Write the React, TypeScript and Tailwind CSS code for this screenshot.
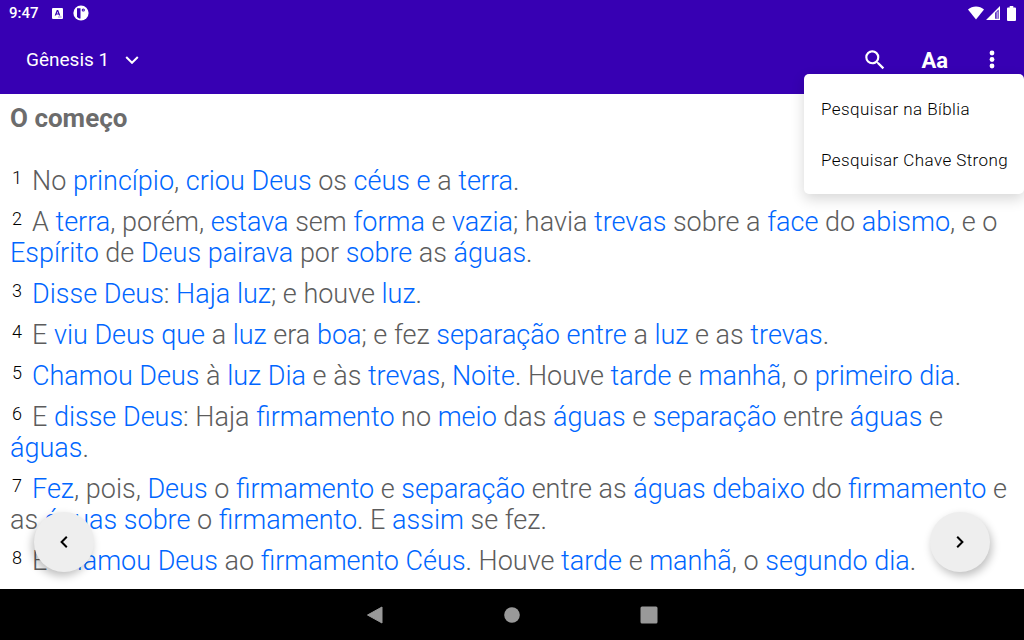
import { Fragment } from "react";

const verses = [
    "No *princípio*, *criou* *Deus* os *céus* *e* a *terra*.",
    "A *terra*, porém, *estava* sem *forma* e *vazia*; havia *trevas* sobre a *face* do *abismo*, e o *Espírito* de *Deus* *pairava* por *sobre* as *águas*.",
    "*Disse* *Deus*: *Haja* *luz*; e houve *luz*.",
    "E *viu* *Deus* *que* a *luz* era *boa*; e fez *separação* *entre* a *luz* e as *trevas*.",
    "*Chamou* *Deus* à *luz* *Dia* e às *trevas*, *Noite*. Houve *tarde* e *manhã*, o *primeiro* *dia*.",
    "E *disse* *Deus*: Haja *firmamento* no *meio* das *águas* e *separação* entre *águas* e *águas*.",
    "*Fez*, pois, *Deus* o *firmamento* e *separação* entre as *águas* *debaixo* do *firmamento* e as *águas* *sobre* o *firmamento*. E *assim* se fez.",
    "E *chamou* *Deus* ao *firmamento* *Céus*. Houve *tarde* e *manhã*, o *segundo* *dia*.",
];

const menuItems = ["Pesquisar na Bíblia", "Pesquisar Chave Strong"];

function Verse({ number, text }: { number: number; text: string }) {
    return (
        <p>
            <span className="inline-block w-[22px] pl-[2px] align-[6px] text-[18px] leading-none text-black">{number}</span>
            {text.split("*").map((part, i) =>
                i % 2 === 1 ? (
                    <a key={i} href="#strong" className="text-[#0066ff]">
                        {part}
                    </a>
                ) : (
                    <Fragment key={i}>{part}</Fragment>
                )
            )}
        </p>
    );
}

function StatusBar() {
    return (
        <div className="flex h-[26px] items-center justify-between pr-2 pl-[9px]">
            <div className="flex items-center">
                <span className="text-[15px] font-medium">9:47</span>
                <svg className="ml-[13px] size-[11px]" viewBox="0 0 11 11" aria-hidden="true">
                    <path
                        fill="currentColor"
                        fillRule="evenodd"
                        d="M1 0h9a1 1 0 0 1 1 1v9a1 1 0 0 1-1 1H1a1 1 0 0 1-1-1V1a1 1 0 0 1 1-1zM4.800 2 2.700 7.600h1.300l.4-1.100h2.200l.4 1.100h1.300L6.200 2zm.7 1.500.7 2H4.800zM6 8.700v.6h3.600v-.6z"
                    />
                </svg>
                <svg className="ml-[10px] size-4" viewBox="0 0 16 16" aria-hidden="true">
                    <circle cx="8" cy="8" r="7.600" fill="currentColor" />
                    <path fill="#3700b3" d="M4 3.200h3.500v10.300H6.200L4 12z" />
                    <circle cx="10.300" cy="5" r="1.600" fill="#3700b3" />
                    <circle cx="10.300" cy="5" r=".6" fill="currentColor" />
                </svg>
            </div>
            <div className="flex items-center">
                <svg className="h-[14px] w-4" viewBox="0 0 16 14" aria-hidden="true">
                    <path fill="currentColor" d="M8 13.600 0 3.400C2.200 1.600 5 .5 8 .5s5.800 1.100 8 2.900z" />
                </svg>
                <svg className="ml-[2px] size-[14px]" viewBox="0 0 14 14" aria-hidden="true">
                    <path fill="currentColor" fillRule="evenodd" d="M14 0v14H0zM12.600 3.400 9.200 6.800v5.900h3.400z" />
                    <path fill="currentColor" d="M10.600 5.400h1v7.300h-1z" />
                </svg>
                <svg className="ml-[7px] h-[15px] w-[9px]" viewBox="0 0 9 15" aria-hidden="true">
                    <path fill="currentColor" d="M2.700 0h3.600v1.500H8a1 1 0 0 1 1 1V14a1 1 0 0 1-1 1H1a1 1 0 0 1-1-1V2.500a1 1 0 0 1 1-1h1.700z" />
                </svg>
            </div>
        </div>
    );
}

function OverflowMenu() {
    return (
        <div className="absolute top-[74px] right-0 z-20 flex w-[220px] flex-col rounded-[5px] bg-white pt-[10px] pb-2 shadow-[0_5px_14px_rgba(0,0,0,0.16)]">
            {menuItems.map((item) => (
                <button key={item} type="button" className="h-[51px] px-[17px] text-left text-[17px] font-light tracking-wide whitespace-nowrap text-black">
                    {item}
                </button>
            ))}
        </div>
    );
}

export default function App() {
    return (
        <div className="relative flex h-screen flex-col bg-white font-['Roboto',sans-serif]">
            <header className="shrink-0 bg-[#3700b3] text-white">
                <StatusBar />
                <div className="flex h-[68px] items-center justify-between pr-[22px] pl-[26px]">
                    <button type="button" className="flex items-center gap-4 text-[19px]">
                        Gênesis 1
                        <svg className="h-2 w-[14px]" viewBox="0 0 14 8" aria-hidden="true">
                            <path d="m1.200 1 5.800 5.800L12.800 1" fill="none" stroke="currentColor" strokeWidth="2" />
                        </svg>
                    </button>
                    <div className="flex items-center">
                        <button type="button" aria-label="Pesquisar">
                            <svg className="size-[26px]" viewBox="0 0 24 24" aria-hidden="true">
                                <path
                                    fill="currentColor"
                                    d="M15.500 14h-.79l-.28-.27A6.471 6.471 0 0 0 16 9.500 6.500 6.500 0 1 0 9.500 16c1.610 0 3.090-.59 4.230-1.570l.27.28v.79l5 4.990L20.490 19zm-6 0C7.010 14 5 11.990 5 9.500S7.010 5 9.500 5 14 7.010 14 9.500 11.990 14 9.500 14z"
                                />
                            </svg>
                        </button>
                        <button type="button" className="ml-[33px] text-[22px] font-bold">
                            Aa
                        </button>
                        <button type="button" className="ml-[34px]" aria-label="Mais opções">
                            <svg className="h-[26px] w-5" viewBox="0 0 20 26" aria-hidden="true">
                                <g fill="currentColor">
                                    <circle cx="10" cy="6" r="2.400" />
                                    <circle cx="10" cy="12.500" r="2.400" />
                                    <circle cx="10" cy="19" r="2.400" />
                                </g>
                            </svg>
                        </button>
                    </div>
                </div>
            </header>

            <OverflowMenu />

            <main className="relative min-h-0 flex-1 overflow-hidden px-[10px] pt-[9px] text-[27px] leading-[31px] text-[#5c5c5c]">
                <h1 className="text-[26px] font-bold text-[#6c6c6c]">O começo</h1>
                <div className="mt-8 flex flex-col gap-[10px] font-light">
                    {verses.map((text, i) => (
                        <Verse key={i} number={i + 1} text={text} />
                    ))}
                </div>

                <button
                    type="button"
                    aria-label="Capítulo anterior"
                    className="absolute bottom-[17px] left-[34px] flex size-[60px] items-center justify-center rounded-full bg-[#eeeeee] text-black shadow-[-2px_4px_8px_rgba(0,0,0,0.25)]"
                >
                    <svg className="h-3 w-2" viewBox="0 0 8 12" aria-hidden="true">
                        <path d="M6.800.8 1.600 6l5.200 5.200" fill="none" stroke="currentColor" strokeWidth="2" />
                    </svg>
                </button>
                <button
                    type="button"
                    aria-label="Próximo capítulo"
                    className="absolute right-[34px] bottom-[17px] flex size-[60px] items-center justify-center rounded-full bg-[#eeeeee] text-black shadow-[2px_4px_8px_rgba(0,0,0,0.25)]"
                >
                    <svg className="h-3 w-2" viewBox="0 0 8 12" aria-hidden="true">
                        <path d="M1.200.8 6.400 6l-5.200 5.200" fill="none" stroke="currentColor" strokeWidth="2" />
                    </svg>
                </button>
            </main>

            {/* System navigation */}
            <nav className="flex h-[51px] shrink-0 items-center justify-center gap-[119px] bg-black text-[#999999]">
                <button type="button" aria-label="Voltar">
                    <svg className="size-[18px]" viewBox="0 0 18 18" aria-hidden="true">
                        <path d="M16 1v16L1.500 9z" fill="currentColor" stroke="currentColor" strokeWidth="1" strokeLinejoin="round" />
                    </svg>
                </button>
                <button type="button" aria-label="Início">
                    <svg className="size-[18px]" viewBox="0 0 18 18" aria-hidden="true">
                        <circle cx="9" cy="9" r="7.800" fill="currentColor" />
                    </svg>
                </button>
                <button type="button" aria-label="Recentes">
                    <svg className="size-[18px]" viewBox="0 0 18 18" aria-hidden="true">
                        <rect x=".5" y=".5" width="17" height="17" rx="1.500" fill="currentColor" />
                    </svg>
                </button>
            </nav>
        </div>
    );
}
